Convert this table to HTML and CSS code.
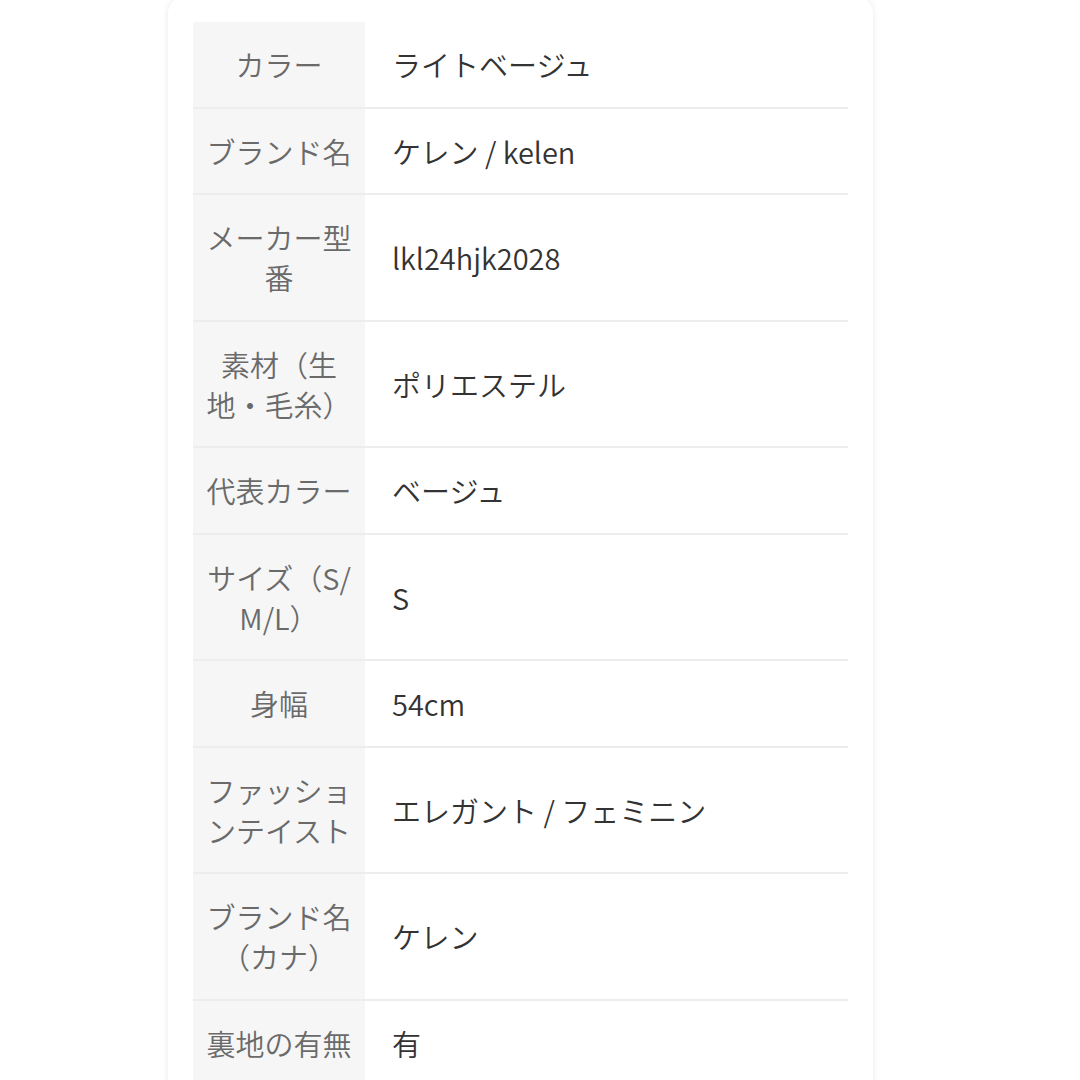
FILE: index.html
```html
<!DOCTYPE html>
<html lang="ja">
<head>
<meta charset="utf-8">
<link rel="stylesheet" href="styles.css">
</head>
<body>
<div class="card">
  <table class="spec">
    <tr><th>カラー</th><td>ライトベージュ</td></tr>
    <tr><th>ブランド名</th><td>ケレン / kelen</td></tr>
    <tr><th>メーカー型番</th><td>lkl24hjk2028</td></tr>
    <tr><th>素材（生地・毛糸）</th><td>ポリエステル</td></tr>
    <tr><th>代表カラー</th><td>ベージュ</td></tr>
    <tr><th>サイズ（S/M/L）</th><td>S</td></tr>
    <tr><th>身幅</th><td>54cm</td></tr>
    <tr><th>ファッションテイスト</th><td>エレガント / フェミニン</td></tr>
    <tr><th>ブランド名（カナ）</th><td>ケレン</td></tr>
    <tr><th>裏地の有無</th><td>有</td></tr>
  </table>
</div>
</body>
</html>
```
FILE: styles.css
```css
html, body {
  margin: 0;
  padding: 0;
  background: #ffffff;
}
body {
  font-family: "Noto Sans CJK JP", "Noto Sans", sans-serif;
  overflow: hidden;
  height: 1080px;
}
.card {
  margin-left: 168px;
  margin-top: -3px;
  width: 705px;
  height: 1200px;
  box-sizing: border-box;
  padding: 25px 25px 0 25px;
  background: #ffffff;
  border-radius: 16px;
  box-shadow: 0 0 6px rgba(0, 0, 0, 0.09);
}
.spec {
  width: 655px;
  border-collapse: collapse;
  table-layout: fixed;
}
.spec th,
.spec td {
  font-size: 29px;
  line-height: 40px;
  font-weight: 350;
  padding-top: 22.25px;
  padding-bottom: 22.25px;
  border-bottom: 2px solid #ededed;
  vertical-align: middle;
}
.spec th {
  width: 148px;
  padding-left: 12px;
  padding-right: 12px;
  background: #f6f6f6;
  color: #6a6a6a;
  text-align: center;
  word-break: break-all;
}
.spec td {
  padding-left: 27px;
  padding-right: 10px;
  color: #333333;
  text-align: left;
}
```
